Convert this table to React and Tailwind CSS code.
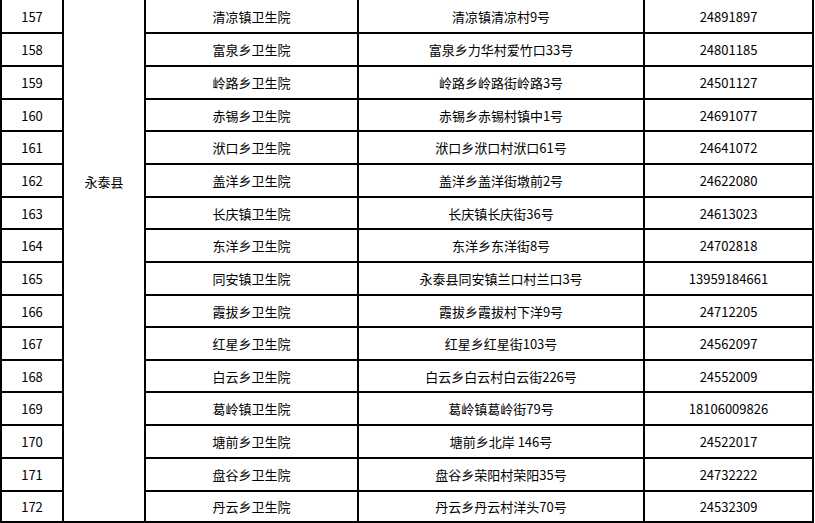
const rows = [
  ["157", "清凉镇卫生院", "清凉镇清凉村9号", "24891897"],
  ["158", "富泉乡卫生院", "富泉乡力华村爱竹口33号", "24801185"],
  ["159", "岭路乡卫生院", "岭路乡岭路街岭路3号", "24501127"],
  ["160", "赤锡乡卫生院", "赤锡乡赤锡村镇中1号", "24691077"],
  ["161", "洑口乡卫生院", "洑口乡洑口村洑口61号", "24641072"],
  ["162", "盖洋乡卫生院", "盖洋乡盖洋街墩前2号", "24622080"],
  ["163", "长庆镇卫生院", "长庆镇长庆街36号", "24613023"],
  ["164", "东洋乡卫生院", "东洋乡东洋街8号", "24702818"],
  ["165", "同安镇卫生院", "永泰县同安镇兰口村兰口3号", "13959184661"],
  ["166", "霞拔乡卫生院", "霞拔乡霞拔村下洋9号", "24712205"],
  ["167", "红星乡卫生院", "红星乡红星街103号", "24562097"],
  ["168", "白云乡卫生院", "白云乡白云村白云街226号", "24552009"],
  ["169", "葛岭镇卫生院", "葛岭镇葛岭街79号", "18106009826"],
  ["170", "塘前乡卫生院", "塘前乡北岸 146号", "24522017"],
  ["171", "盘谷乡卫生院", "盘谷乡荣阳村荣阳35号", "24732222"],
  ["172", "丹云乡卫生院", "丹云乡丹云村洋头70号", "24532309"],
];

const cell = "bg-white flex items-center justify-center";

export default function App() {
  return (
    <div className="w-[815px] h-[523px] bg-white overflow-hidden font-['Noto_Sans_CJK_SC','Noto_Sans',sans-serif] text-[13px] leading-none text-black">
      <div className="grid w-[814px] grid-cols-[60px_80px_211px_284px_167px] grid-rows-[32px_31px_31px_30px_31px_31px_30px_31px_31px_30px_31px_30px_31px_31px_31px_29px] gap-[2px] bg-black px-[2px] pb-[2px]">
        {/* 县 cell spans all visible rows */}
        <div className="bg-white flex justify-center pt-[175px] col-start-2 row-start-1 row-span-16">
          永泰县
        </div>
        {rows.map((r) => (
          <div key={r[0]} className="contents">
            <div className={cell}>{r[0]}</div>
            <div className={cell}>{r[1]}</div>
            <div className={cell}>{r[2]}</div>
            <div className={cell}>{r[3]}</div>
          </div>
        ))}
      </div>
    </div>
  );
}
